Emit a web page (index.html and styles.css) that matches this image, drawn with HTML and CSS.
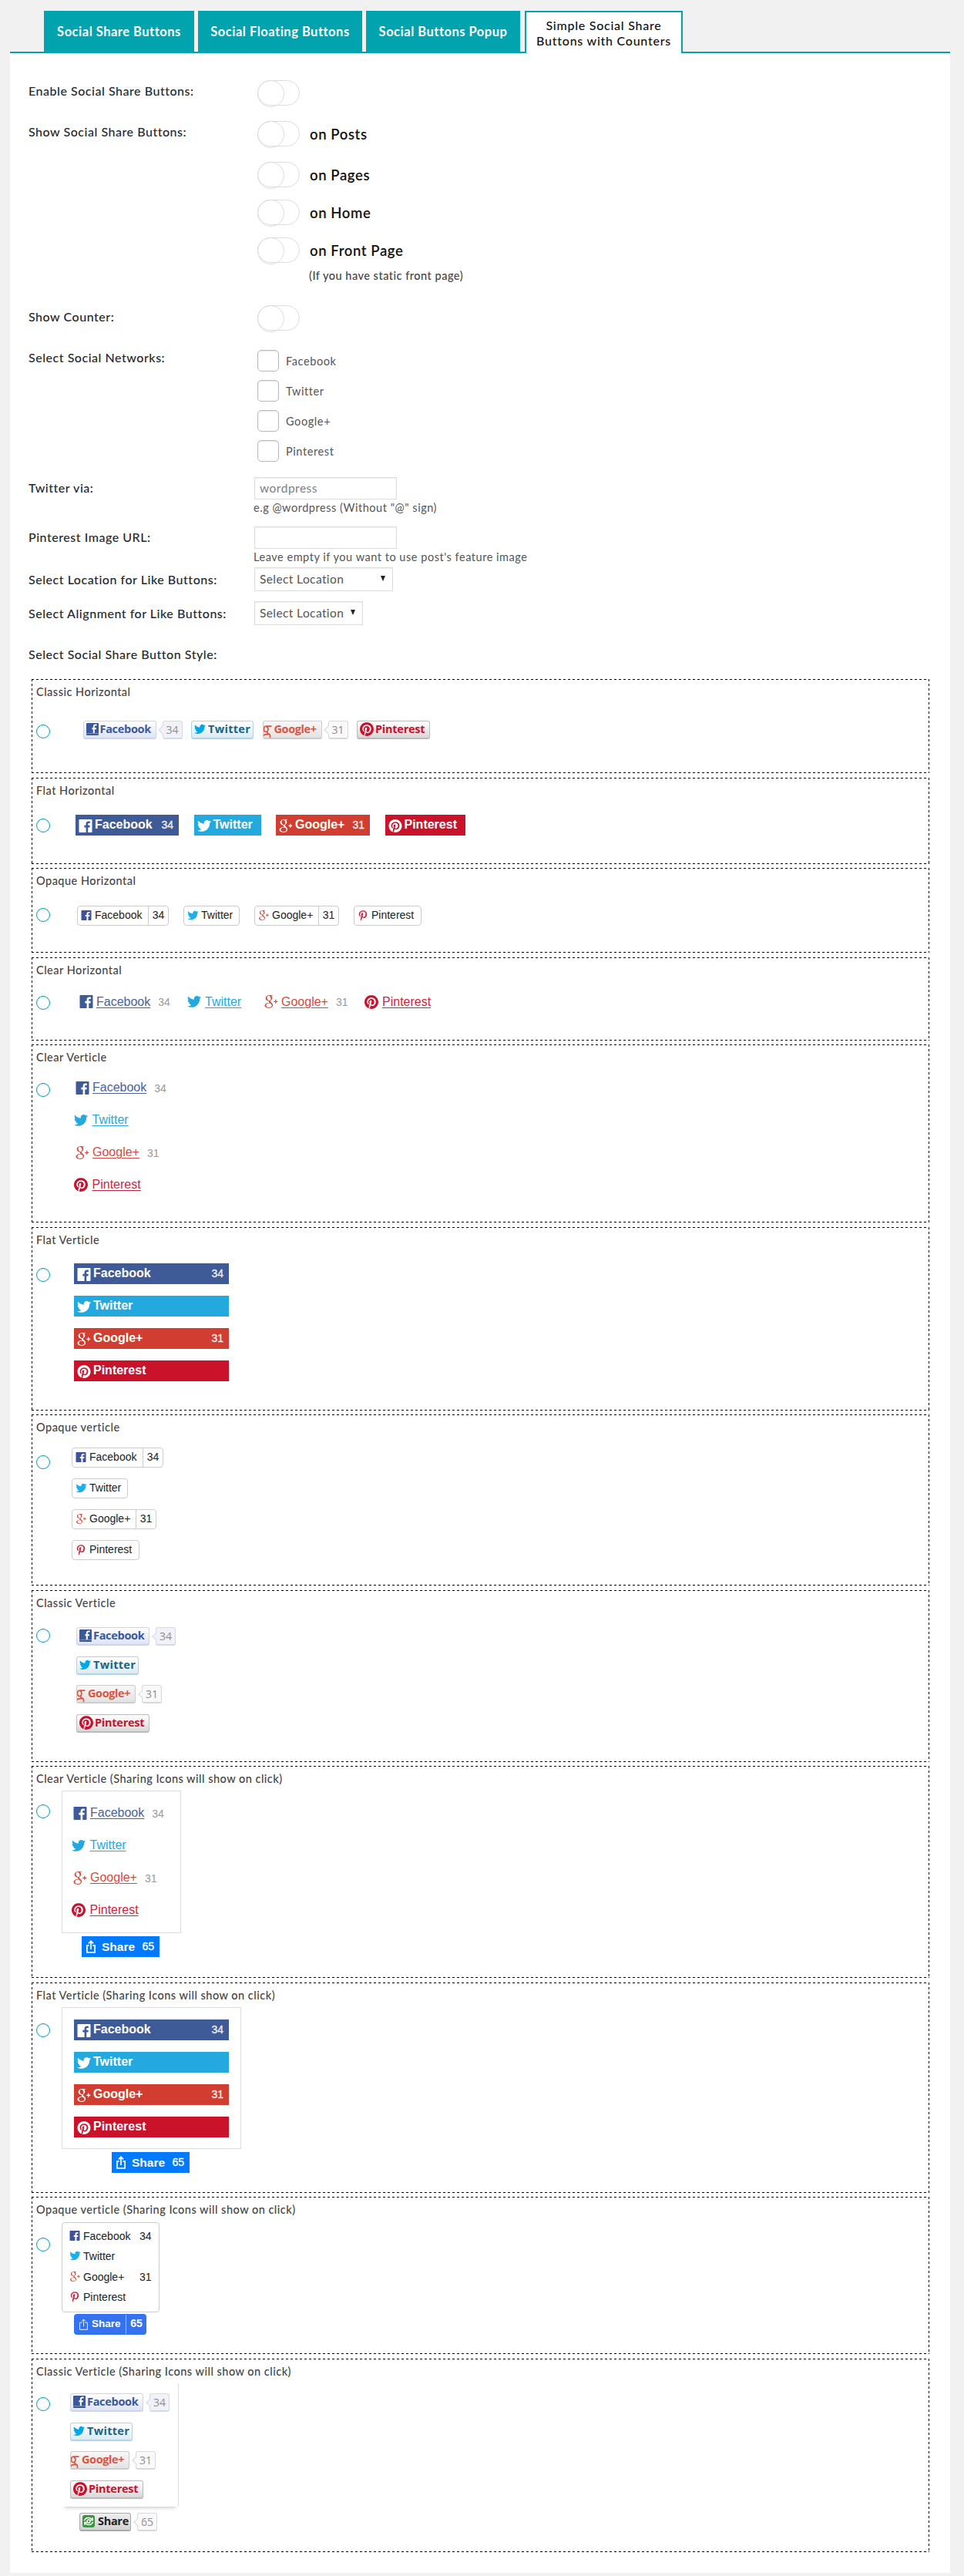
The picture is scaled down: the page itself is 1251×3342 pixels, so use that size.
FILE: index.html
```html
<!DOCTYPE html>
<html lang="en">
<head>
<meta charset="utf-8">
<title>Simple Social Share Buttons with Counters</title>
<link rel="stylesheet" href="styles.css">
</head>
<body>
<svg class="sprite" width="0" height="0" aria-hidden="true">
  <symbol id="fb" viewBox="0 0 24 24"><path d="M22.676 0H1.324C.593 0 0 .593 0 1.324v21.352C0 23.408.593 24 1.324 24h11.494v-9.294H9.689v-3.621h3.129V8.41c0-3.099 1.894-4.785 4.659-4.785 1.325 0 2.464.097 2.796.141v3.24h-1.921c-1.5 0-1.792.721-1.792 1.771v2.311h3.584l-.465 3.63H16.56V24h6.115c.733 0 1.325-.592 1.325-1.324V1.324C24 .593 23.408 0 22.676 0"/></symbol>
  <symbol id="fbc" viewBox="0 0 16 16"><rect width="16" height="16" rx="1" fill="#3b5998"/><path d="M0 13.6h16" stroke="#8496c0" stroke-width="1"/><path d="M13.6 2.6h-1.4c-1.600 0-2.400.9-2.400 2.400v8M7.400 7.300h5.600" stroke="#fff" stroke-width="2" fill="none"/></symbol>
  <symbol id="tw" viewBox="0 1 24 22"><path d="M23.953 4.57a10 10 0 01-2.825.775 4.958 4.958 0 002.163-2.723c-.951.555-2.005.959-3.127 1.184a4.92 4.92 0 00-8.384 4.482C7.69 8.095 4.067 6.13 1.64 3.162a4.822 4.822 0 00-.666 2.475c0 1.71.87 3.213 2.188 4.096a4.904 4.904 0 01-2.228-.616v.06a4.923 4.923 0 003.946 4.827 4.996 4.996 0 01-2.212.085 4.936 4.936 0 004.604 3.417 9.867 9.867 0 01-6.102 2.105c-.39 0-.779-.023-1.17-.067a13.995 13.995 0 007.557 2.209c9.053 0 13.998-7.496 13.998-13.985 0-.21 0-.42-.015-.63A9.935 9.935 0 0024 4.59z"/></symbol>
  <symbol id="gp" viewBox="0 0 13.4 13.6"><path fill-rule="evenodd" d="M8.649 0h-4.187c-1.878 0-3.644 1.422-3.644 3.070 0 1.684 1.28 3.043 3.19 3.043 0.133 0 0.262-0.003 0.388-0.012-0.124 0.237-0.213 0.505-0.213 0.782 0 0.468 0.252 0.847 0.57 1.157-0.24 0-0.473 0.007-0.726 0.007-2.326 0-4.116 1.481-4.116 3.017 0 1.512 1.962 2.458 4.288 2.458 2.651 0 4.116-1.504 4.116-3.017 0-1.213-0.358-1.939-1.464-2.722-0.378-0.268-1.102-0.92-1.102-1.303 0-0.449 0.128-0.67 0.804-1.198 0.693-0.541 1.183-1.302 1.183-2.187 0-1.054-0.469-2.081-1.35-2.42h1.328zM7.186 10.213c0.033 0.14 0.051 0.285 0.051 0.433 0 1.224-0.789 2.181-3.052 2.181-1.61 0-2.773-1.019-2.773-2.243 0-1.2 1.442-2.199 3.052-2.181 0.376 0.004 0.726 0.064 1.044 0.167 0.874 0.608 1.501 0.951 1.678 1.643zM4.615 5.685c-1.081-0.032-2.108-1.209-2.294-2.628s0.537-2.505 1.617-2.473c1.081 0.032 2.108 1.17 2.294 2.589s-0.537 2.544-1.617 2.512z"/><path d="M9.300 6.100h1.500V4.600h1v1.500h1.500v1h-1.500v1.500h-1v-1.500H9.300z"/></symbol>
  <symbol id="gc" viewBox="0 0 11 16"><path fill="none" stroke="currentColor" stroke-width="1.700" d="M2.800 1.100h7.700M2.600 1.200C.2 1.500-.6 7.600 2.300 8.400c4.400 1 4.800-6.200.9-7.100M5.600 7c-1.600 2.400-1.500 3.100 1.300 4.100 2.600 1 1.600 3.600 1.300 4.900M-1 13.800c1.700-1.900 4.200-2.600 7.500-1.900"/></symbol>
  <symbol id="pin" viewBox="0 0 24 24"><path d="M12.017 0C5.396 0 .029 5.367.029 11.987c0 5.079 3.158 9.417 7.618 11.162-.105-.949-.199-2.403.041-3.439.219-.937 1.406-5.957 1.406-5.957s-.359-.72-.359-1.781c0-1.663.967-2.911 2.168-2.911 1.024 0 1.518.769 1.518 1.688 0 1.029-.653 2.567-.992 3.992-.285 1.193.6 2.165 1.775 2.165 2.128 0 3.768-2.245 3.768-5.487 0-2.861-2.063-4.869-5.008-4.869-3.41 0-5.409 2.562-5.409 5.199 0 1.033.394 2.143.889 2.741.099.12.112.225.085.345-.09.375-.293 1.199-.334 1.363-.053.225-.172.271-.401.165-1.495-.69-2.433-2.878-2.433-4.646 0-3.776 2.748-7.252 7.92-7.252 4.158 0 7.392 2.967 7.392 6.923 0 4.135-2.607 7.462-6.233 7.462-1.214 0-2.354-.629-2.758-1.379l-.749 2.848c-.269 1.045-1.004 2.352-1.498 3.146 1.123.345 2.306.535 3.55.535 6.607 0 11.985-5.365 11.985-11.987C23.97 5.39 18.592.026 11.985.026L12.017 0z"/></symbol>
  <symbol id="pp" viewBox="0 0 384 512"><path d="M204 6.500C101.400 6.500 0 74.900 0 185.600 0 256 39.600 296 63.600 296c9.900 0 15.600-27.600 15.600-35.400 0-9.300-23.700-29.100-23.700-67.800 0-80.400 61.200-137.400 140.400-137.400 68.100 0 118.500 38.700 118.500 109.800 0 53.100-21.300 152.700-90.300 152.700-24.900 0-46.200-18-46.200-43.800 0-37.800 26.400-74.400 26.400-113.400 0-66.200-93.900-54.200-93.900 25.800 0 16.800 2.100 35.400 9.600 50.700-13.800 59.400-42 147.900-42 209.100 0 18.900 2.700 37.500 4.500 56.400 3.400 3.800 1.700 3.400 6.900 1.500 50.400-69 48.600-82.500 71.400-172.800 12.300 23.400 44.100 36 69.300 36 106.200 0 153.900-103.500 153.900-196.800C384 71.300 298.200 6.500 204 6.500z"/></symbol>
  <symbol id="up" viewBox="0 0 12 17"><path d="M3.700 6.800H.9v9.200h10.200V6.800H8.300M6 12V2M2.900 4.400L6 1.300l3.100 3.100" fill="none" stroke="currentColor" stroke-width="1.700"/></symbol>
  <symbol id="thin" viewBox="0 0 12 16"><path d="M4 5.500H.6v9.900h10.800V5.500H8M6 11V1.200M3.300 3.600L6 .9l2.700 2.700" fill="none" stroke="currentColor" stroke-width="1"/></symbol>
  <symbol id="loop" viewBox="0 0 16 16"><rect width="16" height="16" rx="3" fill="#3a9440"/><path d="M2.300 7.300C4 3 9 2.200 12.300 5.200M13.700 8.700C12 13 7 13.800 3.700 10.800M10 6.400h3.200V3.200M6 9.600H2.800v3.200" fill="none" stroke="#fff" stroke-width="1.500"/><circle cx="8" cy="8" r="2" fill="none" stroke="#fff" stroke-width="1.300"/></symbol>
</svg>

<nav class="tabs">
  <a class="tab t1">Social Share Buttons</a>
  <a class="tab t2">Social Floating Buttons</a>
  <a class="tab t3">Social Buttons Popup</a>
  <a class="tab active"><span>Simple Social Share</span><span>Buttons with Counters</span></a>
</nav>

<main class="panel">
  <section class="form">
    <div class="row r1"><span class="label">Enable Social Share Buttons:</span><div class="toggles"><i class="toggle"></i></div></div>
    <div class="row r2"><span class="label">Show Social Share Buttons:</span>
      <div class="toggles">
        <label class="on first"><i class="toggle"></i>on Posts</label>
        <label class="on"><i class="toggle"></i>on Pages</label>
        <label class="on"><i class="toggle"></i>on Home</label>
        <label class="on last"><i class="toggle"></i>on Front Page</label>
        <p class="note">(If you have static front page)</p>
      </div>
    </div>
    <div class="row r3"><span class="label">Show Counter:</span><div class="toggles"><i class="toggle"></i></div></div>
    <div class="row r4"><span class="label">Select Social Networks:</span>
      <div class="checks">
        <label><i class="check"></i>Facebook</label>
        <label><i class="check"></i>Twitter</label>
        <label><i class="check"></i>Google+</label>
        <label><i class="check"></i>Pinterest</label>
      </div>
    </div>
    <div class="row r5"><span class="label">Twitter via:</span><div><div class="input">wordpress</div><p class="help">e.g @wordpress (Without "@" sign)</p></div></div>
    <div class="row r6"><span class="label">Pinterest Image URL:</span><div><div class="input"></div><p class="help">Leave empty if you want to use post's feature image</p></div></div>
    <div class="row r7"><span class="label">Select Location for Like Buttons:</span><div class="select wide">Select Location<i class="arrow"></i></div></div>
    <div class="row r8"><span class="label">Select Alignment for Like Buttons:</span><div class="select">Select Location<i class="arrow"></i></div></div>
    <div class="row r9"><span class="label">Select Social Share Button Style:</span></div>
  </section>

  <section class="cards">
    <article class="card c1"><h3>Classic Horizontal</h3><div class="body"><i class="radio"></i>
      <div class="sample classic across">
        <div class="item"><a class="cb fb"><svg><use href="#fbc"/></svg>Facebook</a><b class="bub">34</b></div>
        <div class="item"><a class="cb tw"><svg><use href="#tw"/></svg>Twitter</a></div>
        <div class="item"><a class="cb gp"><svg><use href="#gc"/></svg>Google+</a><b class="bub grey">31</b></div>
        <div class="item"><a class="cb pin"><svg><use href="#pin"/></svg>Pinterest</a></div>
      </div></div></article>

    <article class="card c2"><h3>Flat Horizontal</h3><div class="body"><i class="radio"></i>
      <div class="sample flat across">
        <a class="fl fb"><svg><use href="#fb"/></svg><span>Facebook</span><em>34</em></a>
        <a class="fl tw"><svg><use href="#tw"/></svg><span>Twitter</span></a>
        <a class="fl gp"><svg><use href="#gp"/></svg><span>Google+</span><em>31</em></a>
        <a class="fl pin"><svg><use href="#pin"/></svg><span>Pinterest</span></a>
      </div></div></article>

    <article class="card c3"><h3>Opaque Horizontal</h3><div class="body"><i class="radio"></i>
      <div class="sample opaque across">
        <a class="op fb"><svg><use href="#fb"/></svg><span>Facebook</span><em>34</em></a>
        <a class="op tw"><svg><use href="#tw"/></svg><span>Twitter</span></a>
        <a class="op gp"><svg><use href="#gp"/></svg><span>Google+</span><em>31</em></a>
        <a class="op pin"><svg><use href="#pp"/></svg><span>Pinterest</span></a>
      </div></div></article>

    <article class="card c4"><h3>Clear Horizontal</h3><div class="body"><i class="radio"></i>
      <div class="sample clear across">
        <a class="cl fb"><svg><use href="#fb"/></svg><span>Facebook</span><em>34</em></a>
        <a class="cl tw"><svg><use href="#tw"/></svg><span>Twitter</span></a>
        <a class="cl gp"><svg><use href="#gp"/></svg><span>Google+</span><em>31</em></a>
        <a class="cl pin"><svg><use href="#pin"/></svg><span>Pinterest</span></a>
      </div></div></article>

    <article class="card c5"><h3>Clear Verticle</h3><div class="body"><i class="radio"></i>
      <div class="sample clear down">
        <a class="cl fb"><svg><use href="#fb"/></svg><span>Facebook</span><em>34</em></a>
        <a class="cl tw"><svg><use href="#tw"/></svg><span>Twitter</span></a>
        <a class="cl gp"><svg><use href="#gp"/></svg><span>Google+</span><em>31</em></a>
        <a class="cl pin"><svg><use href="#pin"/></svg><span>Pinterest</span></a>
      </div></div></article>

    <article class="card c6"><h3>Flat Verticle</h3><div class="body"><i class="radio"></i>
      <div class="sample flat down">
        <a class="fl fb"><svg><use href="#fb"/></svg><span>Facebook</span><em>34</em></a>
        <a class="fl tw"><svg><use href="#tw"/></svg><span>Twitter</span></a>
        <a class="fl gp"><svg><use href="#gp"/></svg><span>Google+</span><em>31</em></a>
        <a class="fl pin"><svg><use href="#pin"/></svg><span>Pinterest</span></a>
      </div></div></article>

    <article class="card c7"><h3>Opaque verticle</h3><div class="body"><i class="radio"></i>
      <div class="sample opaque down">
        <a class="op fb"><svg><use href="#fb"/></svg><span>Facebook</span><em>34</em></a>
        <a class="op tw"><svg><use href="#tw"/></svg><span>Twitter</span></a>
        <a class="op gp"><svg><use href="#gp"/></svg><span>Google+</span><em>31</em></a>
        <a class="op pin"><svg><use href="#pp"/></svg><span>Pinterest</span></a>
      </div></div></article>

    <article class="card c8"><h3>Classic Verticle</h3><div class="body"><i class="radio"></i>
      <div class="sample classic down">
        <div class="item"><a class="cb fb"><svg><use href="#fbc"/></svg>Facebook</a><b class="bub">34</b></div>
        <div class="item"><a class="cb tw"><svg><use href="#tw"/></svg>Twitter</a></div>
        <div class="item"><a class="cb gp"><svg><use href="#gc"/></svg>Google+</a><b class="bub grey">31</b></div>
        <div class="item"><a class="cb pin"><svg><use href="#pin"/></svg>Pinterest</a></div>
      </div></div></article>

    <article class="card c9"><h3>Clear Verticle (Sharing Icons will show on click)</h3><div class="body"><i class="radio"></i>
      <div class="popup">
        <div class="pop clear down">
          <a class="cl fb"><svg><use href="#fb"/></svg><span>Facebook</span><em>34</em></a>
          <a class="cl tw"><svg><use href="#tw"/></svg><span>Twitter</span></a>
          <a class="cl gp"><svg><use href="#gp"/></svg><span>Google+</span><em>31</em></a>
          <a class="cl pin"><svg><use href="#pin"/></svg><span>Pinterest</span></a>
        </div>
        <a class="share"><svg><use href="#up"/></svg><span>Share</span><em>65</em></a>
      </div></div></article>

    <article class="card c10"><h3>Flat Verticle (Sharing Icons will show on click)</h3><div class="body"><i class="radio"></i>
      <div class="popup">
        <div class="pop flat down">
          <a class="fl fb"><svg><use href="#fb"/></svg><span>Facebook</span><em>34</em></a>
          <a class="fl tw"><svg><use href="#tw"/></svg><span>Twitter</span></a>
          <a class="fl gp"><svg><use href="#gp"/></svg><span>Google+</span><em>31</em></a>
          <a class="fl pin"><svg><use href="#pin"/></svg><span>Pinterest</span></a>
        </div>
        <a class="share"><svg><use href="#up"/></svg><span>Share</span><em>65</em></a>
      </div></div></article>

    <article class="card c11"><h3>Opaque verticle (Sharing Icons will show on click)</h3><div class="body"><i class="radio"></i>
      <div class="popup">
        <div class="pop opaque">
          <a class="op fb"><svg><use href="#fb"/></svg><span>Facebook</span><em>34</em></a>
          <a class="op tw"><svg><use href="#tw"/></svg><span>Twitter</span></a>
          <a class="op gp"><svg><use href="#gp"/></svg><span>Google+</span><em>31</em></a>
          <a class="op pin"><svg><use href="#pp"/></svg><span>Pinterest</span></a>
        </div>
        <a class="share round"><svg><use href="#thin"/></svg><span>Share</span><em>65</em></a>
      </div></div></article>

    <article class="card c12"><h3>Classic Verticle (Sharing Icons will show on click)</h3><div class="body"><i class="radio"></i>
      <div class="popup">
        <div class="pop classic down">
          <div class="item"><a class="cb fb"><svg><use href="#fbc"/></svg>Facebook</a><b class="bub">34</b></div>
          <div class="item"><a class="cb tw"><svg><use href="#tw"/></svg>Twitter</a></div>
          <div class="item"><a class="cb gp"><svg><use href="#gc"/></svg>Google+</a><b class="bub grey">31</b></div>
          <div class="item"><a class="cb pin"><svg><use href="#pin"/></svg>Pinterest</a></div>
        </div>
        <div class="item total"><a class="cb all"><svg><use href="#loop"/></svg>Share</a><b class="bub grey">65</b></div>
      </div></div></article>
  </section>
</main>
</body>
</html>
```
FILE: styles.css
```css
* { box-sizing: border-box; }
body { margin: 0; background: #f1f1f1; font-family: Lato, "Open Sans", sans-serif; color: #23282d; }
.sprite { display: block; }
svg { display: block; flex: none; fill: currentColor; overflow: visible; }
i, em { font-style: normal; }
p, h3 { margin: 0; }

/* Tabs */
.tabs { display: flex; gap: 5px; margin: 14px 18px 0 13px; padding-left: 44px; height: 55px; border-bottom: 2px solid #00a3ae; }
.tab { display: flex; align-items: center; justify-content: center; height: 53px; background: #00a3ae; color: #fff; font-size: 16.500px; font-weight: 700; letter-spacing: .5px; }
.t1 { width: 195px; }
.t2 { width: 213px; }
.t3 { width: 200px; }
.active { flex-direction: column; width: 205px; height: 55px; margin-left: 1px; background: #fff; border: 2px solid #00a3ae; border-bottom: 0; color: #111; font-size: 16px; font-weight: 500; line-height: 20px; letter-spacing: .75px; }

/* Settings form */
.panel { margin: 0 18px 4px 13px; height: 3269px; padding: 35px 27px 0 24px; background: #fff; }
.row { display: flex; }
.label { width: 293px; padding-top: 4px; font-size: 16px; font-weight: 500; line-height: 20px; letter-spacing: .53px; white-space: nowrap; }
.r1 { height: 53px; }
.r2 { height: 239px; }
.r3 { height: 58px; }
.r3 .label { padding-top: 5px; }
.r4 { height: 165px; }
.r4 .label { padding-top: 0; }
.r5 { height: 64px; }
.r6 { height: 53px; }
.r7 { height: 44px; }
.r8 { height: 59px; }
.r7 .label, .r8 .label { padding-top: 6px; }
.r9 { height: 42px; }
.r9 .label { padding-top: 0; }
.toggles { padding-left: 4px; }
.toggle { display: block; width: 55px; height: 33px; border: 1px solid #ddd; border-radius: 17px; }
.toggle::before { content: ""; display: block; width: 33px; height: 33px; margin: -1px; border: 1px solid #ddd; border-radius: 50%; }
.on { display: flex; align-items: center; gap: 13px; margin-bottom: 16px; color: #111; font-size: 18.500px; font-weight: 600; letter-spacing: .6px; }
.on.first { margin-bottom: 20px; }
.on.last { margin-bottom: 0; }
.note { margin: 7px 0 0 67px; color: #444; font-size: 14.500px; font-weight: 500; line-height: 20px; letter-spacing: .5px; }
.checks { display: grid; gap: 11px; padding-left: 4px; align-content: start; }
.checks label { display: flex; align-items: center; gap: 9px; height: 28px; color: #555; font-size: 14.500px; line-height: 27px; letter-spacing: .6px; }
.check { width: 28px; height: 28px; border: 1px solid #b4b9be; border-radius: 5px; box-shadow: inset 0 1px 2px rgba(0,0,0,.1); }
.input { width: 185px; height: 29px; padding-left: 6px; border: 1px solid #ddd; box-shadow: inset 0 1px 2px rgba(0,0,0,.07); color: #7a7f84; font-size: 15.500px; line-height: 26px; letter-spacing: .5px; }
.help { margin: 1px 0 0 -1px; color: #555; font-size: 14.500px; line-height: 20px; letter-spacing: .53px; white-space: nowrap; }
.select { display: flex; align-items: center; justify-content: space-between; width: 141px; height: 31px; padding: 0 9px 2px 6px; border: 1px solid #ddd; box-shadow: inset 0 1px 2px rgba(0,0,0,.07); color: #555; font-size: 15.500px; letter-spacing: .4px; white-space: nowrap; }
.select.wide { width: 180px; }
.arrow { border: 3.500px solid transparent; border-top: 7px solid #222; border-bottom: 0; }

/* Style cards: the frame is drawn as even 3px dashes on each side */
.cards { margin-left: 4px; }
.card {
  --h: repeating-linear-gradient(90deg, #000 0 3px, transparent 3px 6px);
  --v: repeating-linear-gradient(#000 0 3px, transparent 3px 6px);
  margin-bottom: 6px; padding: 7px 6px 0;
  background: var(--h) top / 100% 1px no-repeat, var(--h) bottom / 100% 1px no-repeat, var(--v) left / 1px 100% no-repeat, var(--v) right / 1px 100% no-repeat;
}
.card:nth-child(even) { margin-bottom: 5px; }
.card h3 { color: #444; font-size: 14.500px; font-weight: 500; line-height: 20px; letter-spacing: .49px; }
.body { display: flex; align-items: flex-start; }
.radio { flex: none; width: 18px; height: 18px; border: 1px solid #00a3ae; border-radius: 50%; box-shadow: inset 0 1px 2px rgba(0,0,0,.1); }
.across { display: flex; }
.down { display: flex; flex-direction: column; align-items: flex-start; }
.c1 { height: 122px; } .c1 .radio { margin-top: 32px; } .c1 .sample { margin: 27px 0 0 42.500px; }
.c2 { height: 112px; } .c2 .radio { margin-top: 26px; } .c2 .sample { margin: 21px 0 0 33px; }
.c3 { height: 110px; } .c3 .radio { margin-top: 25px; } .c3 .sample { margin: 22px 0 0 35px; }
.c4 { height: 108px; } .c4 .radio { margin-top: 23px; } .c4 .sample { margin: 20px 0 0 38px; }
.c5 { height: 231px; } .c5 .radio { margin-top: 23px; } .c5 .sample { margin: 8px 0 0 31px; }
.c6 { height: 238px; } .c6 .radio { margin-top: 26px; } .c6 .sample { margin: 20px 0 0 31px; }
.c7 { height: 222px; } .c7 .radio { margin-top: 26px; } .c7 .sample { margin: 16px 0 0 28px; }
.c8 { height: 223px; } .c8 .radio { margin-top: 23px; } .c8 .sample { margin: 21px 0 0 34px; }
.c9 { height: 275px; } .c9 .radio { margin-top: 23px; } .c9 .popup { margin: 5px 0 0 15px; }
.c10 { height: 273px; } .c10 .radio { margin-top: 26px; } .c10 .popup { margin: 5px 0 0 15px; }
.c11 { height: 204px; } .c11 .radio { margin-top: 26px; } .c11 .popup { margin: 6px 0 0 15px; }
.c12 { height: 251px; } .c12 .radio { margin-top: 23px; } .c12 .popup { margin: 5px 0 0 15px; }

/* Classic buttons */
.item { display: flex; height: 24px; }
.cb { display: flex; align-items: center; height: 24px; padding: 0 0 1px 3px; border: 1px solid #cdd5ea; border-bottom-width: 2px; border-radius: 3px; background: linear-gradient(#fff, #dfe3f4); color: #3b5998; font: 700 14.500px "Open Sans", sans-serif; line-height: 20px; letter-spacing: -.3px; overflow: hidden; }
.cb svg { width: 16px; height: 16px; margin-right: 2px; }
.cb.fb { width: 95px; }
.cb.tw { width: 81px; border-color: #b0d4e6; background: linear-gradient(#fff, #dcebf2); color: #186487; letter-spacing: .3px; }
.cb.tw svg { color: #00a7e7; width: 15px; margin-right: 3px; }
.cb.gp { width: 77px; padding-left: 0; border-color: #ccc; background: linear-gradient(#f7f7f7, #e3e3e3); color: #dc5442; letter-spacing: -.4px; }
.cb.gp svg { width: 11px; height: 16px; margin: 5px 3px 0 0; }
.cb.pin { width: 95px; border-color: #bbb; background: linear-gradient(#fff, #d8d8d8); color: #c8102e; letter-spacing: -.25px; }
.cb.pin svg { width: 18px; height: 18px; }
.cb.all { width: 67px; border-color: #aaa; background: linear-gradient(#eee, #d2d2d2); color: #222; }
.cb.all svg { margin-right: 4px; }
.bub { position: relative; width: 26px; height: 24px; margin-left: 8px; border: 1px solid #d3daec; border-bottom-width: 2px; border-radius: 3px; background: #f0f2f8; color: #8c8e98; font: 400 14px "Open Sans", sans-serif; line-height: 22px; text-align: center; }
.bub::before { content: ""; position: absolute; left: -4.500px; top: 7px; width: 7px; height: 7px; border: solid #d3daec; border-width: 0 0 1px 1px; background: #f0f2f8; transform: rotate(45deg); }
.bub.grey { border-color: #d8d8d8; background: #f9f9f9; }
.bub.grey::before { border-color: #d8d8d8; background: #f9f9f9; }
.c1 .across { gap: 11.500px; }
.c8 .down, .c12 .down { gap: 13.500px; }

/* Flat buttons */
.fl { display: flex; height: 27px; padding: 0 7px 0 4px; color: #fff; font: 700 16px "Liberation Sans", Arial, sans-serif; line-height: 26px; }
.fl svg { width: 18px; height: 17px; margin: 6px 3px 0 0; }
.fl em { margin-left: auto; font-size: 14px; font-weight: 400; color: #f0f0f0; -webkit-text-stroke: .3px #f0f0f0; }
.fl.fb { background: #3e5b98; }
.fl.tw { background: #24a9de; }
.fl.gp { background: #d13e31; }
.fl.pin { background: #ca122b; }
.flat.across { gap: 19.500px; }
.flat.across .fb { width: 134px; }
.flat.across .tw { width: 87px; }
.flat.across .gp { width: 122px; }
.flat.across .pin { width: 104px; }
.flat.down { gap: 15px; }
.flat.down .fl { width: 201px; }

/* Opaque buttons */
.op { display: flex; height: 26px; padding-left: 4px; border: 1px solid #ccc; border-radius: 4px; color: #222; font: 400 14px "Liberation Sans", Arial, sans-serif; line-height: 23px; }
.op svg { width: 14px; height: 13px; margin: 5px 4px 0 0; }
.op em { margin-left: auto; width: 26px; border-left: 1px solid #ccc; text-align: center; }
.op.fb svg { color: #41529b; }
.op.tw svg { color: #1cb0ea; width: 15px; margin-right: 3px; }
.op.gp svg { color: #dd4b39; width: 15px; margin-right: 3px; }
.op.pin svg { color: #cb2740; height: 14px; }
.op.fb { width: 119px; }
.op.tw { width: 73px; }
.op.gp { width: 110px; }
.op.pin { width: 88px; }
.opaque.across { gap: 19px; }
.opaque.down { gap: 14px; }

/* Clear links */
.cl { display: flex; align-items: center; height: 21px; font: 400 16px "Liberation Sans", Arial, sans-serif; line-height: 20px; }
.cl svg { width: 18px; height: 17px; margin-right: 4px; }
.cl span { text-decoration: underline; text-underline-offset: 2px; text-decoration-thickness: 1px; }
.cl em { margin: 1px 0 0 10px; color: #999; font-size: 14px; }
.cl.fb { color: #4863a0; }
.cl.fb svg { color: #3e5b98; }
.cl.tw { color: #24a9de; }
.cl.gp { color: #d9493d; }
.cl.pin { color: #d12440; }
.cl.pin svg { color: #c9122d; height: 18px; }
.clear.across .fb { width: 140px; }
.clear.across .tw { width: 100px; }
.clear.across .gp { width: 130px; }
.clear.across .tw svg, .clear.across .pin svg { margin-right: 5px; }
.clear.down .cl { height: 42px; padding-left: 2px; }
.clear.down .tw, .clear.down .pin { padding-left: 0; }
.clear.down .tw svg, .clear.down .pin svg { margin-right: 5.500px; }

/* Click-to-share popups */
.pop { border: 1px solid #ddd; }
.c9 .pop { width: 155px; height: 185px; padding: 7px 0 0 12px; }
.c10 .pop { width: 233px; height: 184px; padding: 15px 0 0 15px; }
.c11 .pop { width: 127px; height: 117px; padding: 4px 0 0 4px; border-color: #ccc; border-radius: 4px; }
.c11 .pop .op { width: 115px; height: 26.400px; border-color: transparent; line-height: 24px; }
.c11 .pop em { border: 0; width: 18px; text-align: left; }
.c12 .pop { width: 152px; height: 160px; padding: 13px 0 0 11px; border: 0; border-right: 1px solid #ddd; box-shadow: 0 5px 5px -4px rgba(0,0,0,.25); }
.share { display: flex; width: 101px; height: 27px; margin: 4px 0 0 26px; padding: 0 7px 0 6px; background: #007bff; color: #fff; font: 700 15.500px "Liberation Sans", Arial, sans-serif; line-height: 27px; }
.share svg { width: 12px; height: 17px; margin: 5px 8px 0 0; }
.share em { margin-left: auto; font-size: 14px; font-weight: 400; -webkit-text-stroke: .3px #fff; }
.c10 .share { margin-left: 65px; }
.share.round { width: 94px; margin: 2px 0 0 16px; padding: 0 0 0 7px; border-radius: 4px; background: #3572f2; font-size: 13.500px; line-height: 25px; }
.round svg { width: 11px; height: 15px; margin: 6px 5px 0 0; }
.share.round em { width: 27px; margin: 1px 0 1px auto; border-left: 1px solid #a9c4fb; font-weight: 700; line-height: 23px; text-align: center; -webkit-text-stroke: 0; }
.share.round svg { margin: 6px 5px 0 0; }
.total { margin: 8px 0 0 23px; }
```
